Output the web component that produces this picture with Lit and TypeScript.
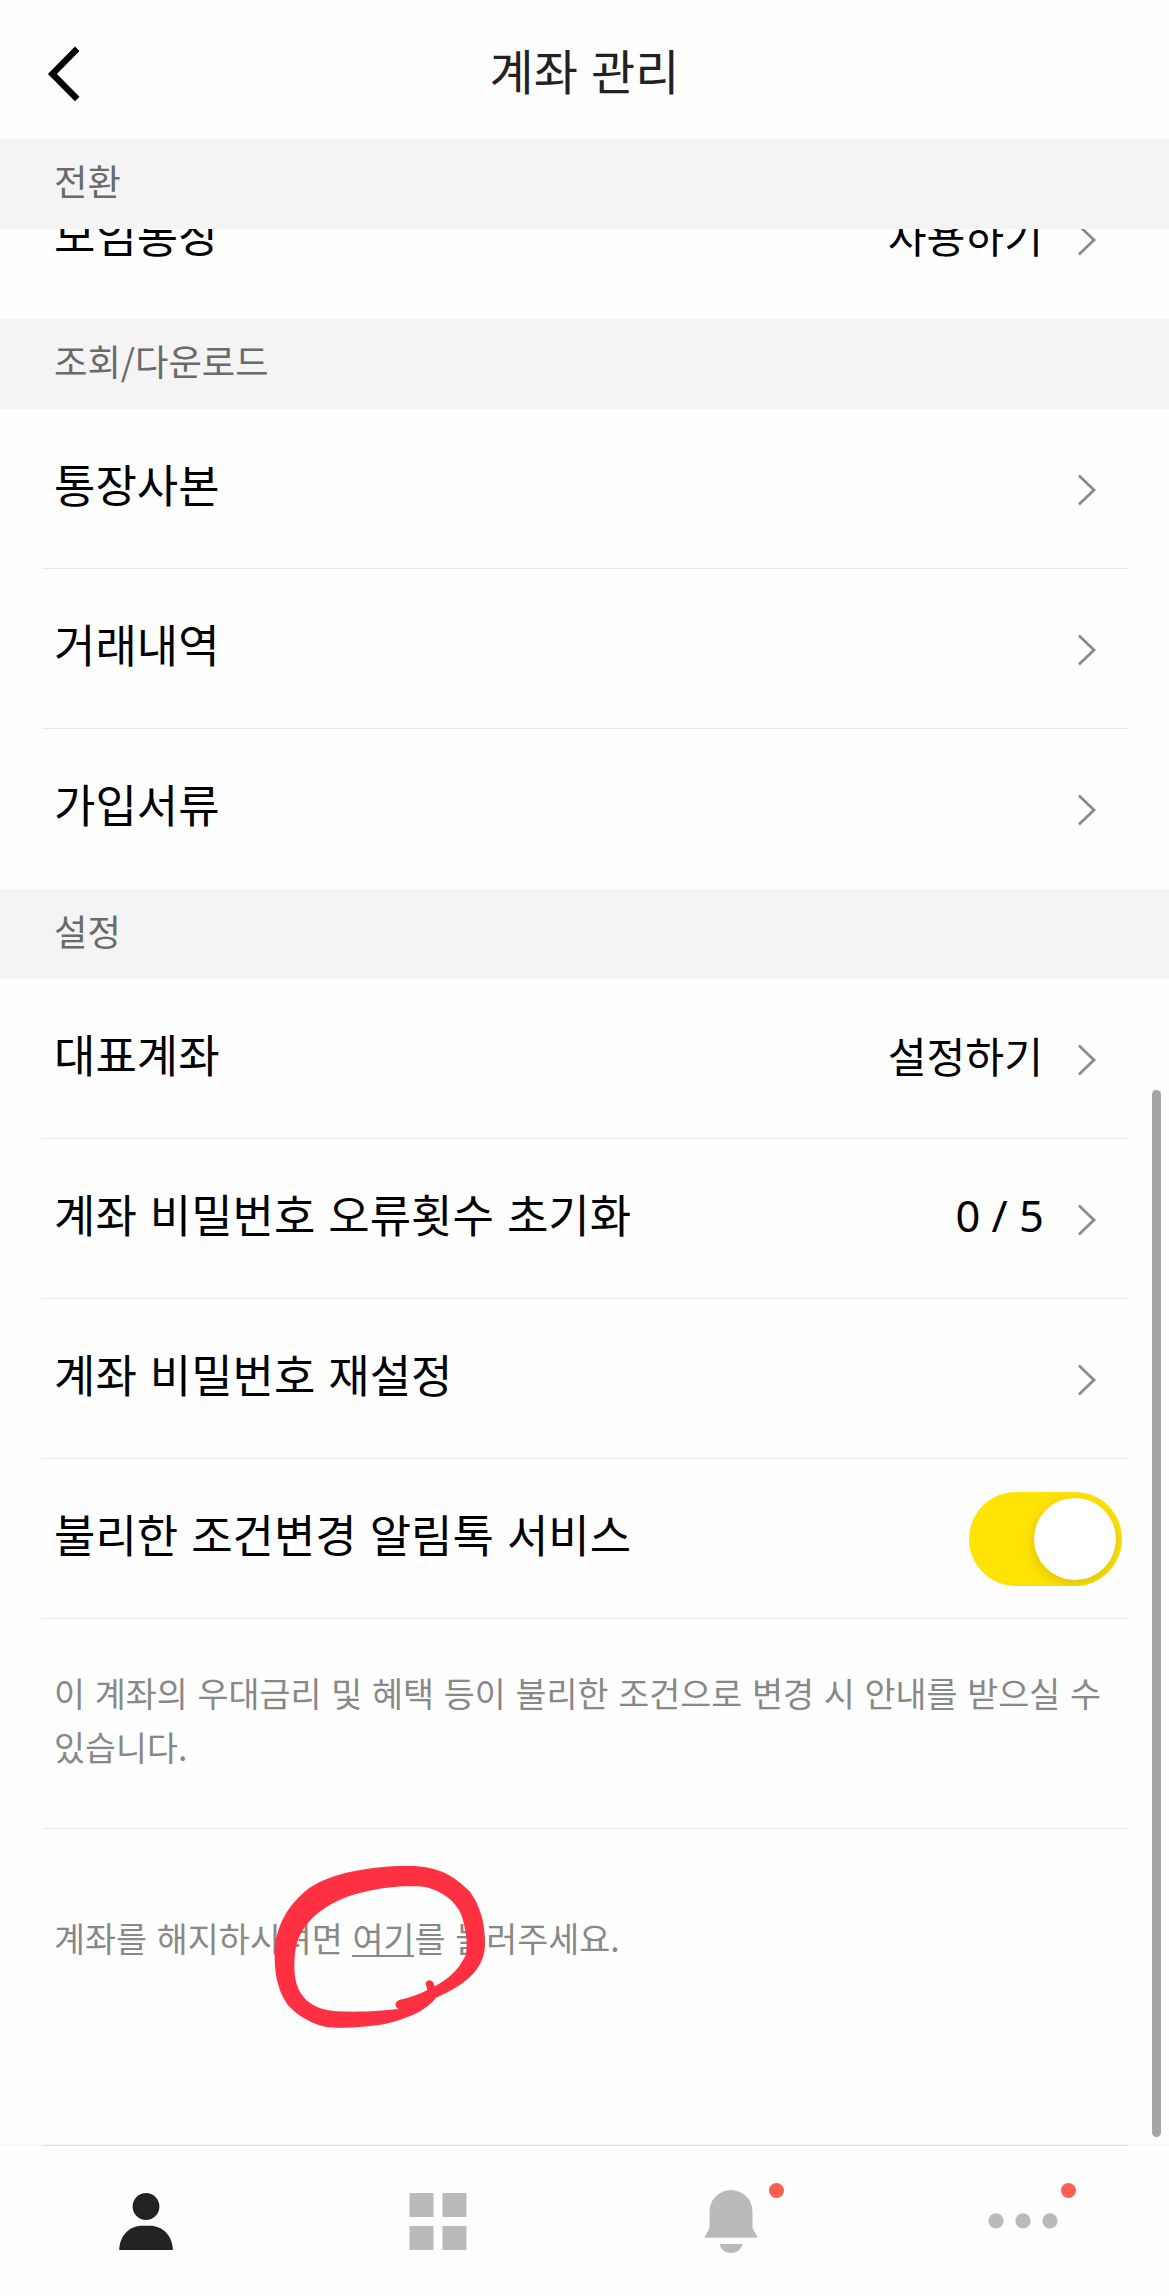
import { LitElement, html, css, svg, nothing } from "lit";
import { customElement, property } from "lit/decorators.js";

interface Item {
  label: string;
  value?: string;
  toggle?: boolean;
  numeric?: boolean;
}

const LOOKUP: Item[] = [
  { label: "통장사본" },
  { label: "거래내역" },
  { label: "가입서류" },
];

const SETTINGS: Item[] = [
  { label: "대표계좌", value: "설정하기" },
  { label: "계좌 비밀번호 오류횟수 초기화", value: "0 / 5", numeric: true },
  { label: "계좌 비밀번호 재설정" },
  { label: "불리한 조건변경 알림톡 서비스", toggle: true },
];

@customElement("section-bar")
class SectionBar extends LitElement {
  static styles = css`
    :host {
      display: flex;
      align-items: center;
      height: 90px;
      box-sizing: border-box;
      padding: 0 54px 9px;
      background: #f4f4f4;
      color: #6a6a6a;
      font-size: 36.3px;
      line-height: 54px;
    }
  `;
  render() {
    return html`<slot></slot>`;
  }
}

@customElement("setting-row")
class SettingRow extends LitElement {
  @property({ attribute: false }) item: Item = { label: "" };

  static styles = css`
    :host {
      display: flex;
      align-items: center;
      height: 160px;
      flex: none;
      box-sizing: border-box;
      padding: 0 0 0 54px;
      color: #000;
    }
    .label {
      flex: 1;
      font-size: 45px;
      line-height: 66px;
      padding-bottom: 10px;
      word-spacing: 0.064em;
    }
    .value {
      font-size: 42.2px;
      line-height: 62px;
      padding-bottom: 9px;
      margin-right: 35px;
    }
    .numeric {
      font-family: "Noto Sans", sans-serif;
      font-size: 43.5px;
      padding-bottom: 9px;
      margin-right: 34px;
    }
    .chevron {
      width: 20px;
      height: 34px;
      margin: 2px 71px 0 0;
      fill: none;
      stroke: #8a8a8a;
      stroke-width: 2.8;
    }
    .toggle {
      display: flex;
      justify-content: flex-end;
      width: 153px;
      height: 94px;
      box-sizing: border-box;
      padding: 6px;
      margin-right: 47px;
      border-radius: 47px;
      background: #ffe305;
      overflow: hidden;
    }
    .knob {
      width: 82px;
      height: 82px;
      border-radius: 50%;
      background: #fff;
      box-shadow: 0 4px 14px rgba(140, 120, 30, 0.32);
    }
  `;

  render() {
    const { label, value, toggle, numeric } = this.item;
    return html`
      <span class="label">${label}</span>
      ${value
        ? html`<span class=${numeric ? "value numeric" : "value"}>${value}</span>`
        : nothing}
      ${toggle
        ? html`<span class="toggle"><span class="knob"></span></span>`
        : html`<svg class="chevron" viewBox="0 0 20 34">
            <path d="M0.900 2.500 L16 17 L0.900 31.500" />
          </svg>`}
    `;
  }
}

const personIcon = svg`<svg class="icon" viewBox="0 0 60 70">
  <ellipse cx="30" cy="16.500" rx="13.400" ry="13.500" fill="#222" />
  <path d="M3.2 60 C3.5 45 14 35.7 26 35.7 H34 C46 35.7 56.5 45 56.8 60 Z" fill="#222" />
</svg>`;

const gridIcon = svg`<svg class="icon" viewBox="0 0 60 70">
  <path d="M1.5 3h24v24h-24zM34.5 3h24v24h-24zM1.5 36h24v24h-24zM34.5 36h24v24h-24z" fill="#bababa" />
</svg>`;

const bellIcon = svg`<svg class="icon" viewBox="0 0 60 70">
  <path d="M8.5 21.5 a21.5 21.5 0 0 1 43 0 V38 L56.7 47.7 H3.3 L8.5 38 Z" fill="#bababa" />
  <path d="M18.5 54 H41.5 C40 60 35.5 63 30 63 C24.500 63 20 60 18.5 54 Z" fill="#bababa" />
</svg>`;

const moreIcon = svg`<svg class="icon wide" viewBox="0 0 80 70">
  <g fill="#bababa">
    <circle cx="13" cy="30.800" r="7.600" />
    <circle cx="40" cy="30.800" r="7.600" />
    <circle cx="67" cy="30.800" r="7.600" />
  </g>
</svg>`;

@customElement("app-root")
class AppRoot extends LitElement {
  static styles = css`
    :host {
      display: flex;
      flex-direction: column;
      position: relative;
      width: 1169px;
      height: 2296px;
      overflow: hidden;
      background: #fefefe;
      font-family: "Noto Sans CJK KR", "Noto Sans", sans-serif;
    }
    .header {
      display: grid;
      grid-template-columns: 160px 1fr 160px;
      align-items: center;
      height: 139px;
      flex: none;
    }
    .back {
      width: 40px;
      height: 60px;
      margin: 8px 0 0 44px;
      fill: none;
      stroke: #000;
      stroke-width: 6.4;
    }
    .title {
      text-align: center;
      color: #222;
      font-size: 48px;
      line-height: 70px;
      margin: 0;
      padding-bottom: 1px;
      font-weight: 400;
      word-spacing: 0.05em;
    }
    .clipped {
      display: flex;
      flex-direction: column;
      justify-content: flex-end;
      height: 90px;
      flex: none;
      overflow: hidden;
    }
    .divider {
      height: 1px;
      margin: -1px 41px 0 42px;
      background: #ebebeb;
      flex: none;
    }
    .note {
      margin: 0;
      padding: 47px 53px 0 54px;
      height: 210px;
      box-sizing: border-box;
      color: #888;
      font-size: 33.7px;
      line-height: 53.5px;
      word-break: keep-all;
      word-spacing: 0.066em;
    }
    .close {
      position: relative;
      margin: 0;
      padding: 82px 53px 0 54px;
      flex: 1;
      color: #888;
      font-size: 33.7px;
      line-height: 53.5px;
      word-spacing: 0.066em;
    }
    .link {
      border-bottom: 2px solid #888;
      display: inline-block;
      line-height: 34px;
    }
    .marker {
      position: absolute;
      left: 240px;
      top: -19px;
      width: 400px;
      height: 240px;
      fill: #ff3042;
    }
    .scrollbar {
      position: absolute;
      left: 1152px;
      top: 1090px;
      width: 9px;
      height: 1047px;
      border-radius: 5px;
      background: #a5a5a5;
    }
    .edge {
      padding: 1px 41px 0 42px;
      background: #f8f8f8;
      flex: none;
    }
    .edge-line {
      height: 1px;
      background: #e0e0e0;
    }
    .nav {
      display: grid;
      grid-template-columns: repeat(4, 292.3px);
      height: 150px;
      flex: none;
    }
    .tab {
      position: relative;
      display: flex;
      justify-content: center;
      padding-top: 44px;
    }
    .icon {
      width: 60px;
      height: 70px;
    }
    .wide {
      width: 80px;
    }
    .dot {
      position: absolute;
      left: 184px;
      top: 37px;
      width: 15px;
      height: 15px;
      border-radius: 50%;
      background: #ff5f50;
    }
  `;

  private rows(items: Item[]) {
    return items.map(
      (item, i) => html`${i ? html`<div class="divider"></div>` : nothing}
        <setting-row .item=${item}></setting-row>`
    );
  }

  render() {
    return html`
      <header class="header">
        <svg class="back" viewBox="0 0 40 60">
          <path d="M33.200 4.700 L8.400 29.900 L33.200 55.100" />
        </svg>
        <h1 class="title">계좌 관리</h1>
      </header>
      <section-bar>전환</section-bar>
      <div class="clipped">
        <setting-row .item=${{ label: "모임통장", value: "사용하기" }}></setting-row>
      </div>
      <section-bar>조회/다운로드</section-bar>
      ${this.rows(LOOKUP)}
      <section-bar>설정</section-bar>
      ${this.rows(SETTINGS)}
      <div class="divider"></div>
      <p class="note">
        이 계좌의 우대금리 및 혜택 등이 불리한 조건으로 변경 시 안내를 받으실 수 있습니다.
      </p>
      <div class="divider"></div>
      <p class="close">
        계좌를 해지하시려면 <span class="link">여기</span>를 눌러주세요.
        <svg class="marker" viewBox="0 0 1200 720">
          <path
            fill-rule="evenodd"
            d="M500 168 C590 166 640 195 690 245 C722 290 735 340 735 400 C736 465 692 520 588 563
               C560 600 510 622 450 638 C400 650 310 656 265 652 C220 645 165 615 140 580
               C110 535 103 480 104 430 C105 350 145 285 200 240 C265 190 390 168 500 168 Z
               M500 229 C440 231 380 240 320 261 C255 285 205 325 180 375 C163 410 162 450 164 490
               C168 540 190 570 225 588 C255 604 290 604 340 605 C390 605 430 602 476 597
               C462 590 464 574 480 569 C510 563 535 554 562 540 L557 521 C558 507 578 507 581 521
               L584 529 C625 508 655 480 676 438 C686 405 676 350 664 314 C645 270 605 245 565 233
               C545 228 525 228 500 229 Z"
          />
        </svg>
      </p>
      <div class="edge"><div class="edge-line"></div></div>
      <nav class="nav">
        <div class="tab">${personIcon}</div>
        <div class="tab">${gridIcon}</div>
        <div class="tab">${bellIcon}<span class="dot"></span></div>
        <div class="tab">${moreIcon}<span class="dot"></span></div>
      </nav>
      <div class="scrollbar"></div>
    `;
  }
}
